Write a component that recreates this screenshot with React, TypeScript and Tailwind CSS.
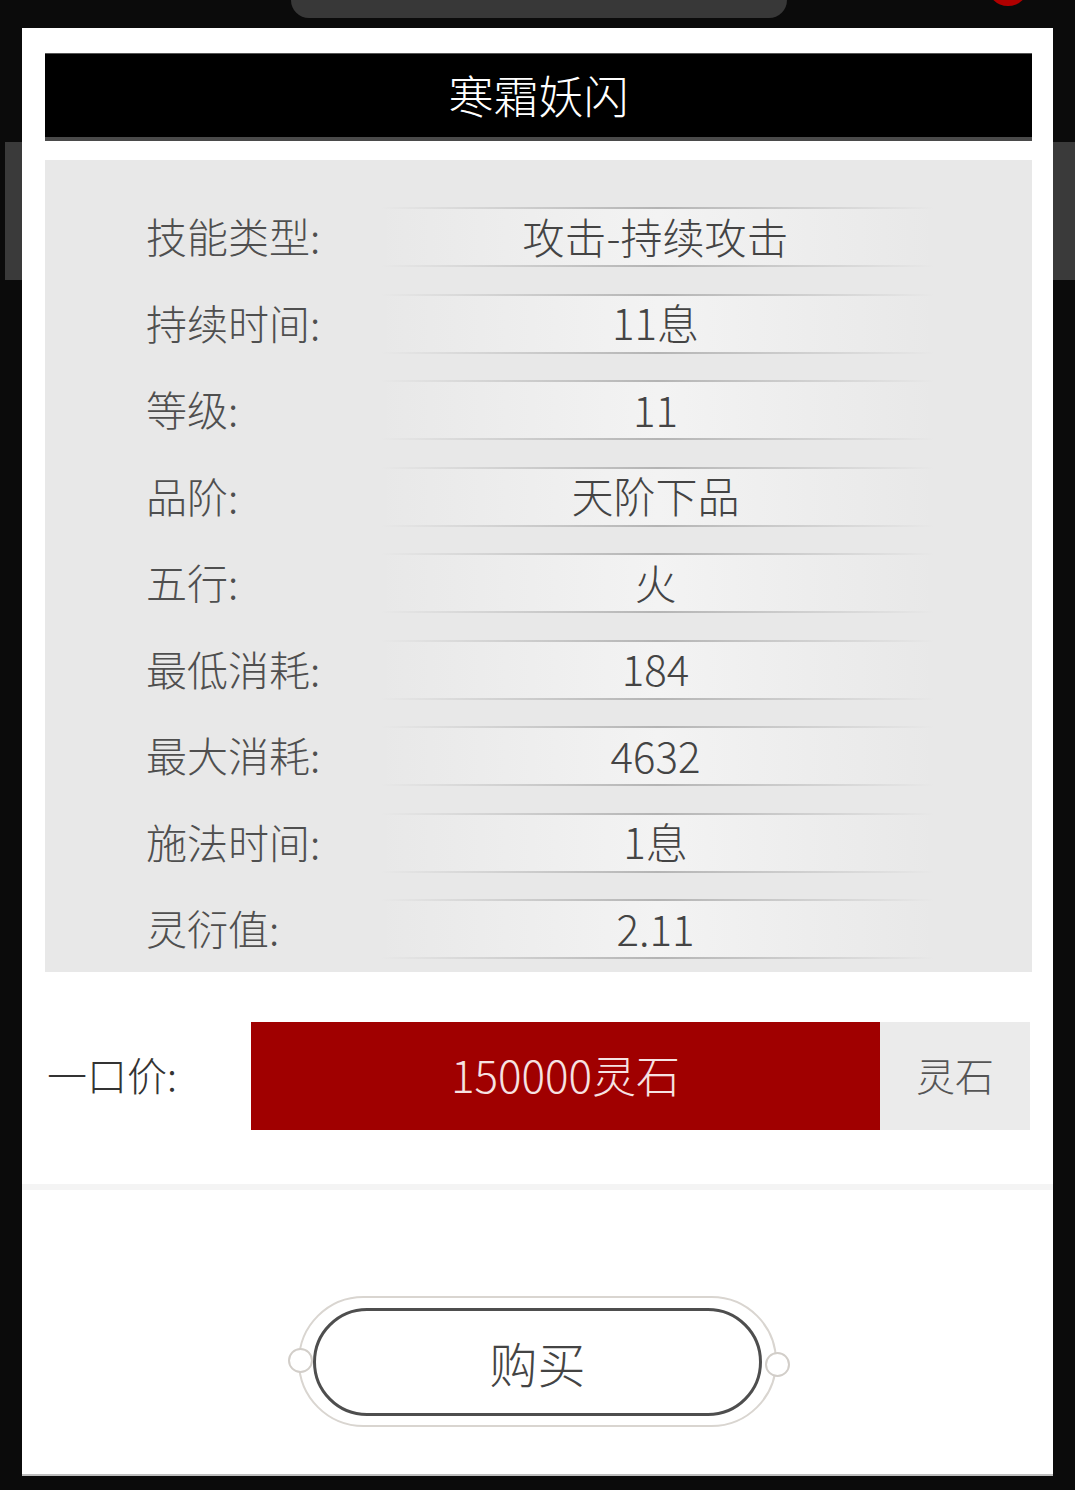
import React from 'react';

const rows: [string, string][] = [
  ['技能类型:', '攻击-持续攻击'],
  ['持续时间:', '11息'],
  ['等级:', '11'],
  ['品阶:', '天阶下品'],
  ['五行:', '火'],
  ['最低消耗:', '184'],
  ['最大消耗:', '4632'],
  ['施法时间:', '1息'],
  ['灵衍值:', '2.11'],
];

const font = { fontFamily: '"Noto Sans CJK SC", "Noto Sans", sans-serif' };

const InfoRow: React.FC<{ label: string; value: string }> = ({ label, value }) => (
  <div className="flex items-center h-[60px]">
    <div className="w-[335px] shrink-0 pl-[101px] pb-[3px] text-[41px] leading-none text-[#4f4f4f] font-light whitespace-nowrap">
      {label}
    </div>
    <div className="w-[555px] h-[60px] flex flex-col">
      <div className="h-[2px] bg-gradient-to-r from-transparent via-[#b4b4b4] to-transparent" />
      <div className="flex-1 flex items-center justify-center pb-[3px] pr-[4px] bg-gradient-to-r from-transparent via-[#f3f3f3] to-transparent text-[42px] leading-none text-[#444] font-light">
        {value}
      </div>
      <div className="h-[2px] bg-gradient-to-r from-transparent via-[#b4b4b4] to-transparent" />
    </div>
  </div>
);

export default function App() {
  return (
    <div className="relative w-[1075px] h-[1490px] bg-[#0b0b0b] overflow-hidden" style={font}>
      {/* blurred page behind the dialog */}
      <div className="absolute left-[291px] top-[-20px] w-[496px] h-[38px] rounded-b-[18px] bg-[#383838]" />
      <div className="absolute left-[987px] top-[-36px] w-[42px] h-[42px] rounded-full bg-[#b00000]" />
      <div className="absolute left-[5px] top-[142px] w-[30px] h-[138px] bg-[#3a3a3a]" />
      <div className="absolute left-[1040px] top-[142px] w-[40px] h-[138px] bg-[#3a3a3a]" />

      {/* dialog */}
      <div className="relative ml-[22px] pt-[28px]">
        <div className="w-[1031px] h-[1448px] bg-white border-b-2 border-[#bdbdbd] flex flex-col">
          <div className="pl-[23px] pr-[21px] pt-[25px]">
            <div className="h-[88px] bg-black border-t border-[#555] border-b-4 border-b-[#4a4a4a] flex items-center justify-center pb-[3px] text-white text-[45px] font-light leading-none">
              寒霜妖闪
            </div>
            <div className="mt-[19px] h-[812px] bg-[#e8e8e8] pt-[47px] flex flex-col gap-[26.5px]">
              {rows.map(([l, v]) => (
                <InfoRow key={l} label={l} value={v} />
              ))}
            </div>
          </div>

          {/* price */}
          <div className="pl-[25px] pr-[23px] mt-[50px] flex items-center h-[108px]">
            <div className="w-[204px] shrink-0 pb-[4px] text-[40px] leading-none text-[#333] font-light">一口价:</div>
            <div className="w-[629px] h-full bg-[#a00000] flex items-center justify-center pb-[4px] text-[44px] leading-none text-[#f6e2e2] font-light">
              150000灵石
            </div>
            <div className="flex-1 h-full bg-[#ebebeb] flex items-center justify-center pb-[4px] text-[39px] leading-none text-[#555] font-light">
              灵石
            </div>
          </div>

          <div className="mt-[54px] h-[6px] bg-[#f4f4f4]" />

          {/* buy button */}
          <div className="flex justify-center pt-[106px]">
            <div className="relative w-[479px] h-[131px] rounded-full border-2 border-[#d9d5d0] flex items-center justify-center">
              <div className="w-[449px] h-[108px] rounded-full border-[3px] border-[#4e4e4e] flex items-center justify-center text-[48px] leading-none text-[#444] font-light">
                购买
              </div>
              <div className="absolute left-[-12px] top-[50px] w-[25px] h-[25px] rounded-full bg-white border-2 border-[#d2cec9]" />
              <div className="absolute right-[-15px] top-[54px] w-[25px] h-[25px] rounded-full bg-white border-2 border-[#d2cec9]" />
            </div>
          </div>
        </div>
      </div>
    </div>
  );
}
